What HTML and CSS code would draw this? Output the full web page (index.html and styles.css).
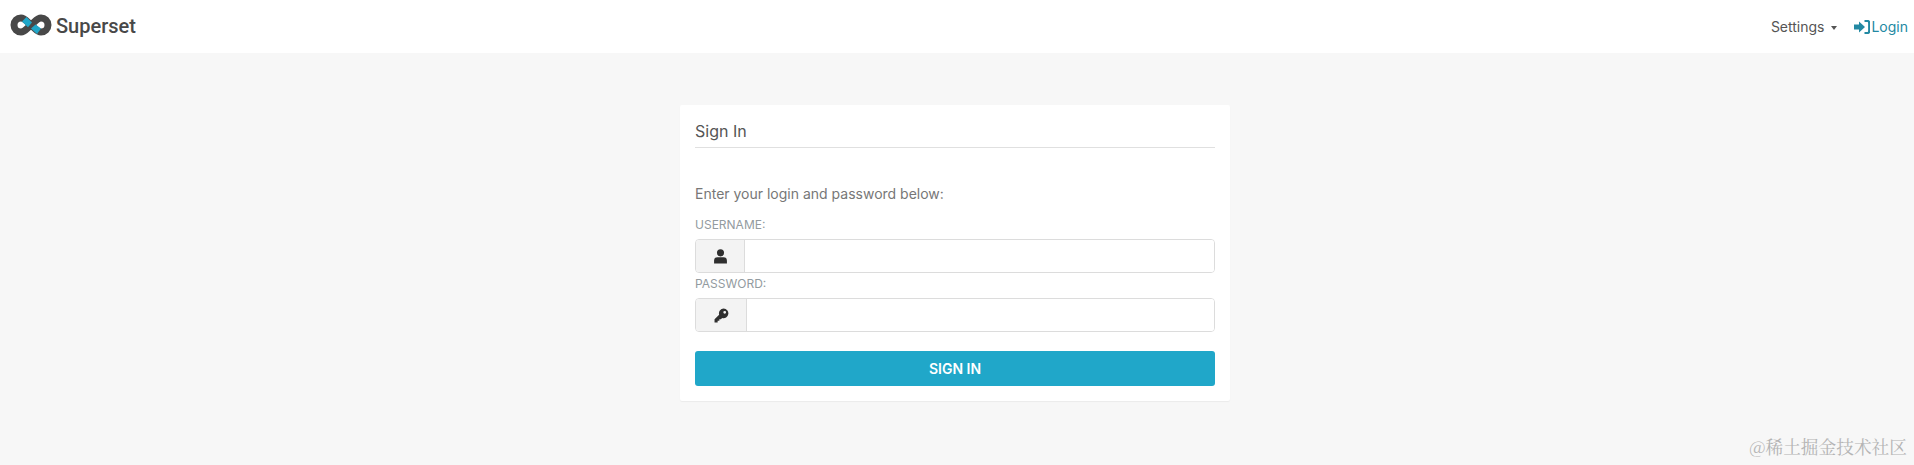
FILE: index.html
```html
<!DOCTYPE html>
<html lang="en">
  <head>
    <meta charset="UTF-8" />
    <title>Superset</title>
    <link rel="stylesheet" href="styles.css">
  </head>
  <body>
    <nav class="navbar">
      <a class="brand" href="#">
        <svg class="logo" viewBox="0 0 42 22" width="42" height="22">
          <path d="M11 4C15 4 17.5 8.5 21 11C24.5 13.5 27 18 31 18C34.9 18 38 14.9 38 11C38 7.1 34.9 4 31 4C27 4 24.5 8.5 21 11C17.5 13.5 15 18 11 18C7.1 18 4 14.9 4 11C4 7.1 7.1 4 11 4Z" fill="none" stroke="#484848" stroke-width="7"/>
          <path d="M16.5 3L22 8.5L18 13.2L12 7.6Z" fill="#20a7c9"/>
          <path d="M21 14.5L25.5 10.5L31 14.5L27 20Z" fill="#20a7c9"/>
        </svg>
        <span class="brand-name">Superset</span>
      </a>
      <div class="nav-links">
        <a class="nav-settings" href="#">Settings <span class="caret"></span></a>
        <a class="nav-login" href="#">
          <svg class="login-icon" viewBox="0 0 16 14" width="16" height="14">
            <path d="M0 4.5h5V1.5l6 5.5L5 12.500V9.500H0Z" fill="currentColor"/>
            <path d="M10.500 1H13.500Q15.200 1 15.200 3V11Q15.200 13 13.500 13H10.500" fill="none" stroke="currentColor" stroke-width="2.200"/>
          </svg>Login</a>
      </div>
    </nav>

    <main class="content">
      <div class="card">
        <div class="card-title">Sign In</div>
        <p class="hint">Enter your login and password below:</p>
        <form>
          <label class="field-label">USERNAME:</label>
          <div class="input-group">
            <span class="addon addon-user">
              <svg viewBox="0 0 14 14" width="15" height="15">
                <circle cx="7" cy="3.6" r="3.3" fill="#2f2f2f"/>
                <path d="M1 13.500V11Q1 7.800 4.200 7.800H9.800Q13 7.800 13 11V13.500Z" fill="#2f2f2f"/>
              </svg>
            </span>
            <input class="text-input" type="text">
          </div>
          <label class="field-label">PASSWORD:</label>
          <div class="input-group">
            <span class="addon addon-key">
              <svg viewBox="0 0 14 14" width="15" height="15">
                <path fill-rule="evenodd" d="M9 .5A4.500 4.500 0 1 1 7.600 9.300L6.500 10.400H5V12H3.400V13.500H.5V10.600L4.800 6.300A4.500 4.500 0 0 1 9 .5ZM10 2.700A1.300 1.300 0 1 0 10 5.300A1.300 1.300 0 1 0 10 2.700Z" fill="#2f2f2f"/>
              </svg>
            </span>
            <input class="text-input" type="password">
          </div>
          <button class="sign-in" type="button">SIGN IN</button>
        </form>
      </div>
    </main>

    <div class="watermark">@稀土掘金技术社区</div>
  </body>
</html>
```

FILE: styles.css
```css
html, body{
  height: 100%;
}
body{
  position: relative;
  margin: 0;
  overflow: hidden;
  background-color: #f7f7f7;
  color: #555555;
  font-family: Inter, "Noto Sans CJK SC", sans-serif;
  font-size: 14px;
}
a{
  text-decoration: none;
}
.navbar{
  display: flex;
  justify-content: space-between;
  align-items: center;
  height: 53px;
  padding: 0 6px 0 10px;
  background-color: white;
}
.brand{
  display: flex;
  align-items: center;
  gap: 4px;
  margin-bottom: 2px;
}
.logo{
  margin-bottom: 2px;
}
.brand-name{
  font-family: Roboto, sans-serif;
  font-size: 20px;
  font-weight: 500;
  color: #484848;
}
.nav-links{
  display: flex;
  align-items: center;
  gap: 17px;
}
.nav-settings{
  color: #555555;
}
.caret{
  display: inline-block;
  margin-left: 3px;
  vertical-align: 2px;
  border-top: 4px solid #555555;
  border-left: 3px solid transparent;
  border-right: 3px solid transparent;
}
.nav-login{
  display: flex;
  align-items: center;
  color: #2389a3;
}
.login-icon{
  margin-right: 1px;
}
.content{
  display: flex;
  justify-content: center;
  padding: 52px 4px 0 0;
}
.card{
  box-sizing: border-box;
  width: 550px;
  height: 296px;
  padding: 15px;
  background-color: white;
  border-radius: 2px;
  box-shadow: 0 1px 1px rgba(0, 0, 0, 0.05);
}
.card-title{
  height: 26px;
  padding-bottom: 1px;
  border-bottom: 1px solid #e0e0e0;
  font-size: 16px;
  line-height: 22px;
}
.hint{
  margin: 36px 0 0;
  color: #777777;
  font-size: 14px;
  line-height: 20px;
}
.field-label{
  display: block;
  color: #939ba0;
  font-size: 12px;
  line-height: 16px;
}
.hint + form{
  margin-top: 13px;
}
.input-group{
  display: flex;
  box-sizing: border-box;
  height: 34px;
  margin: 6px 0 3px;
  border: 1px solid #dcdcdc;
  border-radius: 4px;
  overflow: hidden;
}
.addon{
  display: flex;
  justify-content: center;
  align-items: center;
  box-sizing: border-box;
  background-color: #f3f3f3;
  border-right: 1px solid #dcdcdc;
}
.addon-user{
  width: 49px;
}
.addon-key{
  width: 51px;
}
.text-input{
  flex: 1;
  min-width: 0;
  border: none;
  outline: none;
  background-color: white;
}
.sign-in{
  display: block;
  width: 100%;
  height: 35px;
  margin-top: 19px;
  border: none;
  border-radius: 3px;
  background-color: #20a7c9;
  color: white;
  font-family: Inter, sans-serif;
  font-size: 14px;
  font-weight: 600;
  cursor: pointer;
}
.watermark{
  position: absolute;
  right: 7px;
  bottom: 6px;
  color: #b4b4b4;
  font-family: "Noto Serif CJK SC", "Noto Sans CJK SC", sans-serif;
  font-size: 17.7px;
  line-height: 24px;
}
```
